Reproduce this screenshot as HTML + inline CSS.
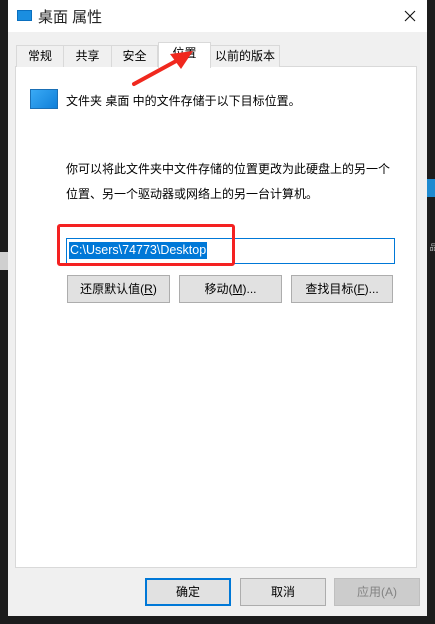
<!DOCTYPE html>
<html><head><meta charset="utf-8"><style>
*{margin:0;padding:0;box-sizing:border-box}
body{width:435px;height:624px;background:#1c1c1c;position:relative;overflow:hidden;font-family:"Liberation Sans","Noto Sans CJK SC",sans-serif;font-size:12px;color:#000}
.a{position:absolute}
.win{left:8px;top:0;width:419px;height:616px;background:#f0f0f0}
.title{left:8px;top:0;width:419px;height:32px;background:#fff}
.tab{position:absolute;top:45px;height:22px;border:1px solid #d9d9d9;border-bottom:none;background:#f0f0f0;text-align:center;line-height:20px;font-size:12px}
.panel{left:15px;top:66px;width:402px;height:502px;background:#fff;border:1px solid #d9d9d9}
.btn{position:absolute;background:#e1e1e1;border:1px solid #adadad;text-align:center;font-size:12px}
</style></head><body>
<div class="a win"></div>
<div class="a title"></div>
<div class="a" style="left:17px;top:10px;width:15px;height:11px;background:#1a8ee0;border:1px solid #0a6fbf"></div>
<div class="a" style="left:38px;top:6px;font-size:15px;color:#222">桌面 属性</div>
<svg class="a" style="left:404px;top:10px" width="12" height="12"><path d="M1 1L11 11M11 1L1 11" stroke="#111" stroke-width="1.1"/></svg>
<div class="a" style="left:0;top:252px;width:8px;height:18px;background:#cfcfcf"></div>
<div class="a" style="left:427px;top:179px;width:8px;height:18px;background:#1e8ad0"></div>
<div class="a" style="left:428px;top:243px;font-size:8px;color:#bbb;writing-mode:vertical-rl">品</div>
<div class="a panel"></div>
<div class="tab" style="left:16px;width:48px">常规</div>
<div class="tab" style="left:63px;width:49px">共享</div>
<div class="tab" style="left:111px;width:47px">安全</div>
<div class="tab" style="left:210px;width:70px">以前的版本</div>
<div class="tab" style="left:158px;top:42px;height:26px;width:53px;background:#fff;line-height:20px">位置</div>
<div class="a" style="left:30px;top:89px;width:28px;height:20px;background:linear-gradient(135deg,#3aaaf5,#0f7fd9);border:1px solid #1a6fb5"></div>
<div class="a" style="left:66px;top:92px">文件夹 桌面 中的文件存储于以下目标位置。</div>
<div class="a" style="left:66px;top:157px;line-height:25px">你可以将此文件夹中文件存储的位置更改为此硬盘上的另一个<br>位置、另一个驱动器或网络上的另一台计算机。</div>
<div class="a" style="left:66px;top:238px;width:329px;height:26px;background:#fff;border:1px solid #0078d7"></div>
<div class="a" style="left:69px;top:242px;height:17px;background:#0078d7;color:#fff;line-height:17px;font-size:12.5px;padding:0 1px">C:\Users\74773\Desktop</div>
<div class="a" style="left:57px;top:224px;width:178px;height:42px;border:3px solid #f42121;border-radius:3px"></div>
<div class="btn" style="left:67px;top:275px;width:103px;height:28px;line-height:26px">还原默认值(<u>R</u>)</div>
<div class="btn" style="left:179px;top:275px;width:103px;height:28px;line-height:26px">移动(<u>M</u>)...</div>
<div class="btn" style="left:291px;top:275px;width:102px;height:28px;line-height:26px">查找目标(<u>F</u>)...</div>
<div class="btn" style="left:145px;top:578px;width:86px;height:28px;line-height:24px;border:2px solid #0078d7">确定</div>
<div class="btn" style="left:240px;top:578px;width:86px;height:28px;line-height:26px">取消</div>
<div class="btn" style="left:334px;top:578px;width:86px;height:28px;line-height:26px;background:#ccc;border-color:#bfbfbf;color:#838383">应用(A)</div>
<svg class="a" style="left:0;top:0" width="435" height="624"><line x1="134" y1="84" x2="178" y2="60" stroke="#f0281e" stroke-width="4" stroke-linecap="round"/><polygon points="193,51 170,54 181,69" fill="#f0281e"/></svg>
</body></html>
